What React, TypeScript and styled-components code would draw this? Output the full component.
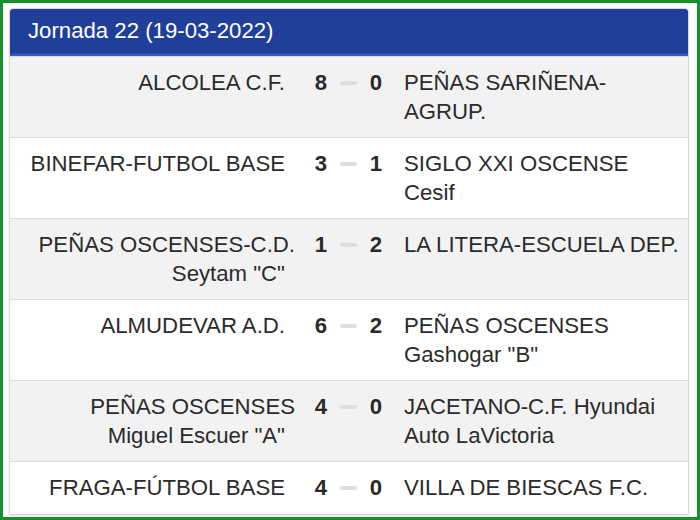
import styled, { createGlobalStyle } from 'styled-components'

const GlobalStyle = createGlobalStyle`
  html, body {
    margin: 0;
    padding: 0;
    background: #ffffff;
  }
  body {
    font-family: "Liberation Sans", Arial, Helvetica, sans-serif;
  }
`

const Frame = styled.div`
  box-sizing: border-box;
  width: 700px;
  height: 520px;
  border: 3px solid #17902c;
  padding: 5px 8px 3px 6px;
  background: #ffffff;
`

const Panel = styled.div`
  border: 1px solid #d8d8d8;
  border-radius: 4px 4px 2px 2px;
  overflow: hidden;
  box-shadow: 0 1px 2px rgba(0, 0, 0, 0.12);
`

const Header = styled.div`
  height: 44px;
  display: flex;
  align-items: center;
  padding-left: 18px;
  background: #1f3f9b;
  border-bottom: 2px solid #3a5cb6;
  box-shadow: inset 0 -1px 0 #2a4aa6;
  color: #ffffff;
  font-size: 22.2px;
  padding-bottom: 1px;
`

const Row = styled.div<{ $shaded: boolean }>`
  display: grid;
  grid-template-columns: 300px 22px 33px 22px 1fr;
  align-items: start;
  padding: 11px 0;
  border-top: 1px solid #dcdcdc;
  background: ${({ $shaded }) => ($shaded ? '#f2f2f2' : '#ffffff')};
  color: #2b2b2b;
  font-size: 22.2px;
  line-height: 29px;
  &:first-of-type {
    border-top: none;
  }
  &:last-of-type {
    padding-bottom: 12px;
  }
`

const Home = styled.div`
  text-align: right;
  padding-right: 15px;
`

const Away = styled.div`
  padding-left: 17px;
`

const Line = styled.span`
  display: block;
  white-space: nowrap;
`

const HomeLine = styled(Line)`
  &:last-child {
    padding-right: 10px;
  }
`

const Score = styled.div`
  text-align: center;
  font-weight: bold;
  color: #2a2a2a;
`

const DashCell = styled.div`
  height: 29px;
  display: flex;
  align-items: center;
  justify-content: center;
`

const Dash = styled.span`
  width: 17px;
  height: 4px;
  border-radius: 2px;
  background: #dedede;
`

type Match = {
  home: string[]
  away: string[]
  homeGoals: number
  awayGoals: number
}

const matches: Match[] = [
  { home: ['ALCOLEA C.F.'], homeGoals: 8, awayGoals: 0, away: ['PEÑAS SARIÑENA-', 'AGRUP.'] },
  { home: ['BINEFAR-FUTBOL BASE'], homeGoals: 3, awayGoals: 1, away: ['SIGLO XXI OSCENSE', 'Cesif'] },
  { home: ['PEÑAS OSCENSES-C.D.', 'Seytam "C"'], homeGoals: 1, awayGoals: 2, away: ['LA LITERA-ESCUELA DEP.'] },
  { home: ['ALMUDEVAR A.D.'], homeGoals: 6, awayGoals: 2, away: ['PEÑAS OSCENSES', 'Gashogar "B"'] },
  { home: ['PEÑAS OSCENSES', 'Miguel Escuer "A"'], homeGoals: 4, awayGoals: 0, away: ['JACETANO-C.F. Hyundai', 'Auto LaVictoria'] },
  { home: ['FRAGA-FÚTBOL BASE'], homeGoals: 4, awayGoals: 0, away: ['VILLA DE BIESCAS F.C.'] },
]

export default function App() {
  return (
    <>
      <GlobalStyle />
      <Frame>
        <Panel>
          <Header>Jornada 22 (19-03-2022)</Header>
          {matches.map((m, i) => (
            <Row key={i} $shaded={i % 2 === 0}>
              <Home>
                {m.home.map((line) => (
                  <HomeLine key={line}>{line}</HomeLine>
                ))}
              </Home>
              <Score>{m.homeGoals}</Score>
              <DashCell>
                <Dash />
              </DashCell>
              <Score>{m.awayGoals}</Score>
              <Away>
                {m.away.map((line) => (
                  <Line key={line}>{line}</Line>
                ))}
              </Away>
            </Row>
          ))}
        </Panel>
      </Frame>
    </>
  )
}
